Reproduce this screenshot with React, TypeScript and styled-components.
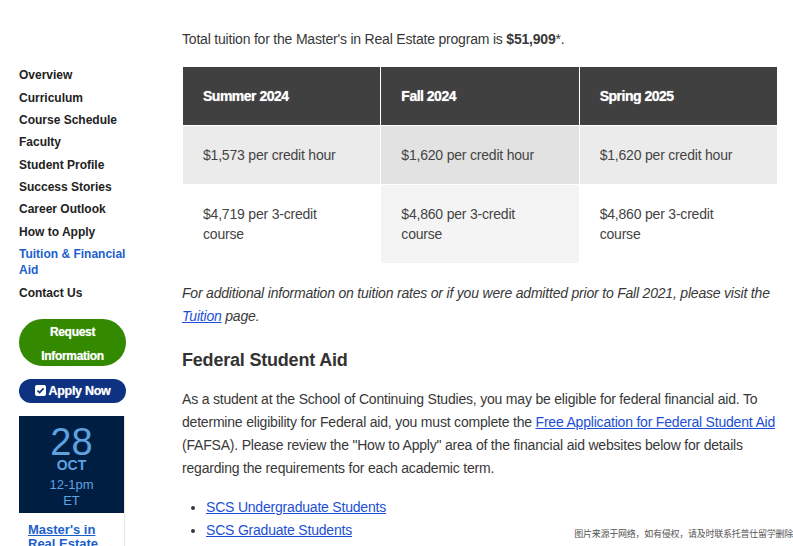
import styled, { createGlobalStyle } from 'styled-components'

const GlobalStyle = createGlobalStyle`
  body {
    margin: 0;
    font-family: "Liberation Sans", Arial, sans-serif;
    color: #383838;
    background: #fff;
  }
`

const Page = styled.div`
  position: relative;
  display: flex;
  align-items: flex-start;
  width: 793px;
  height: 546px;
  overflow: hidden;
`

const Sidebar = styled.aside`
  width: 107px;
  margin-left: 19px;
  padding-top: 64px;
  display: flex;
  flex-direction: column;
`

const Nav = styled.ul`
  list-style: none;
  margin: 0;
  padding: 0;
`

const NavItem = styled.li<{ $active?: boolean }>`
  font-size: 12px;
  font-weight: bold;
  line-height: 16px;
  padding: 3.2px 0;
  color: ${p => (p.$active ? '#1c5fcc' : '#222')};
`

const RequestButton = styled.div`
  margin-top: 15px;
  height: 47px;
  box-sizing: border-box;
  padding-top: 3px;
  border-radius: 24px;
  background: #338a00;
  color: #fff;
  font-size: 12px;
  font-weight: bold;
  line-height: 24px;
  letter-spacing: -0.3px;
  text-align: center;
  display: flex;
  flex-direction: column;
  justify-content: center;
  text-shadow: 0 0 1px rgba(255, 255, 255, 0.6);
`

const ApplyButton = styled.div`
  margin-top: 13px;
  height: 24px;
  border-radius: 12px;
  background: #0d3282;
  color: #fff;
  font-size: 12.5px;
  font-weight: bold;
  letter-spacing: -0.3px;
  display: flex;
  align-items: center;
  justify-content: center;
  gap: 3px;
  text-shadow: 0 0 1px rgba(255, 255, 255, 0.6);
`

const EventCard = styled.div`
  margin-top: 13px;
  width: 105px;
  border-right: 1px solid #e6e6e6;
`

const EventDate = styled.div`
  background: #001e42;
  color: #5ea2e0;
  text-align: center;
  padding-top: 9px;
  height: 97px;
  box-sizing: border-box;
`

const Day = styled.div`
  font-size: 38px;
  line-height: 34px;
`

const Month = styled.div`
  font-size: 14px;
  font-weight: bold;
  line-height: 16px;
  margin-top: -2px;
`

const Time = styled.div<{ $first?: boolean }>`
  font-size: 13px;
  line-height: 16px;
  margin-top: ${p => (p.$first ? '4px' : '0')};
`

const EventBody = styled.div`
  padding: 10px 9px;
`

const EventLink = styled.a`
  font-size: 13px;
  font-weight: bold;
  line-height: 14px;
  color: #1c5fcc;
  text-decoration: underline;
  display: block;
`

const Main = styled.main`
  width: 596px;
  margin-left: 56px;
  padding-top: 28px;
  font-size: 14px;
  line-height: 23px;
  letter-spacing: -0.2px;
`

const Paragraph = styled.p<{ $italic?: boolean }>`
  margin: 0 0 15px;
  font-style: ${p => (p.$italic ? 'italic' : 'normal')};
`

const Table = styled.table`
  width: 100%;
  border-collapse: collapse;
  table-layout: fixed;
  margin-bottom: 18px;
`

const Th = styled.th`
  background: #404040;
  color: #fff;
  text-align: left;
  font-size: 14px;
  line-height: 20px;
  letter-spacing: -0.5px;
  padding: 19px 20px;
  border: 1px solid #fff;
  text-shadow: 0 0 1px rgba(255, 255, 255, 0.7);
`

const Td = styled.td<{ $bg: string }>`
  background: ${p => p.$bg};
  color: #444;
  font-size: 14px;
  line-height: 20px;
  padding: 19px 20px;
  border: 1px solid #fff;
  vertical-align: middle;
`

const Link = styled.a`
  color: #1c4fd6;
  text-decoration: underline;
`

const Heading = styled.h2`
  font-size: 18px;
  font-weight: bold;
  line-height: 24px;
  margin: 20px 0 16px;
  color: #333;
`

const List = styled.ul`
  margin: 16px 0 0;
  padding-left: 24px;
`

const ListItem = styled.li`
  line-height: 23px;
`

const Watermark = styled.div`
  position: absolute;
  right: 0;
  bottom: 5px;
  background: #fff;
  color: #555;
  font-size: 9px;
  line-height: 14px;
  letter-spacing: -0.25px;
  padding: 0 0 0 10px;
  font-family: "Noto Sans CJK SC", sans-serif;
  white-space: nowrap;
`

const CheckIcon = () => (
  <svg width="11" height="11" viewBox="0 0 11 11">
    <rect x="0" y="0" width="11" height="11" rx="2" fill="#fff" />
    <path d="M2.5 5.6 L4.6 7.6 L8.6 3.4" stroke="#0d3282" strokeWidth="1.7" fill="none" />
  </svg>
)

const navItems = [
  'Overview',
  'Curriculum',
  'Course Schedule',
  'Faculty',
  'Student Profile',
  'Success Stories',
  'Career Outlook',
  'How to Apply',
  'Tuition & Financial Aid',
  'Contact Us',
]

const terms = [
  { name: 'Summer 2024', hour: '$1,573', course: '$4,719', bg1: '#ebebeb', bg2: '#ffffff' },
  { name: 'Fall 2024', hour: '$1,620', course: '$4,860', bg1: '#e2e2e2', bg2: '#f4f4f4' },
  { name: 'Spring 2025', hour: '$1,620', course: '$4,860', bg1: '#ebebeb', bg2: '#ffffff' },
]

const App = () => {
  return (
    <Page>
      <GlobalStyle />
      <Sidebar>
        <Nav>
          {navItems.map(item => (
            <NavItem key={item} $active={item === 'Tuition & Financial Aid'}>
              {item}
            </NavItem>
          ))}
        </Nav>
        <RequestButton>
          <span>Request</span>
          <span>Information</span>
        </RequestButton>
        <ApplyButton>
          <CheckIcon />
          Apply Now
        </ApplyButton>
        <EventCard>
          <EventDate>
            <Day>28</Day>
            <Month>OCT</Month>
            <Time $first>12-1pm</Time>
            <Time>ET</Time>
          </EventDate>
          <EventBody>
            <EventLink>Master's in Real Estate</EventLink>
          </EventBody>
        </EventCard>
      </Sidebar>
      <Main>
        <Paragraph>
          Total tuition for the Master's in Real Estate program is <b>$51,909</b>*.
        </Paragraph>
        <Table>
          <thead>
            <tr>
              {terms.map(t => (
                <Th key={t.name}>{t.name}</Th>
              ))}
            </tr>
          </thead>
          <tbody>
            <tr>
              {terms.map(t => (
                <Td key={t.name} $bg={t.bg1}>
                  {t.hour} per credit hour
                </Td>
              ))}
            </tr>
            <tr>
              {terms.map(t => (
                <Td key={t.name} $bg={t.bg2}>
                  {t.course} per 3-credit course
                </Td>
              ))}
            </tr>
          </tbody>
        </Table>
        <Paragraph $italic>
          For additional information on tuition rates or if you were admitted prior to Fall 2021, please visit the{' '}
          <Link>Tuition</Link> page.
        </Paragraph>
        <Heading>Federal Student Aid</Heading>
        <Paragraph>
          As a student at the School of Continuing Studies, you may be eligible for federal financial aid. To
          determine eligibility for Federal aid, you must complete the{' '}
          <Link>Free Application for Federal Student Aid</Link> (FAFSA). Please review the "How to Apply" area of the
          financial aid websites below for details regarding the requirements for each academic term.
        </Paragraph>
        <List>
          <ListItem>
            <Link>SCS Undergraduate Students</Link>
          </ListItem>
          <ListItem>
            <Link>SCS Graduate Students</Link>
          </ListItem>
        </List>
      </Main>
      <Watermark>图片来源于网络，如有侵权，请及时联系托普仕留学删除</Watermark>
    </Page>
  )
}

export default App
